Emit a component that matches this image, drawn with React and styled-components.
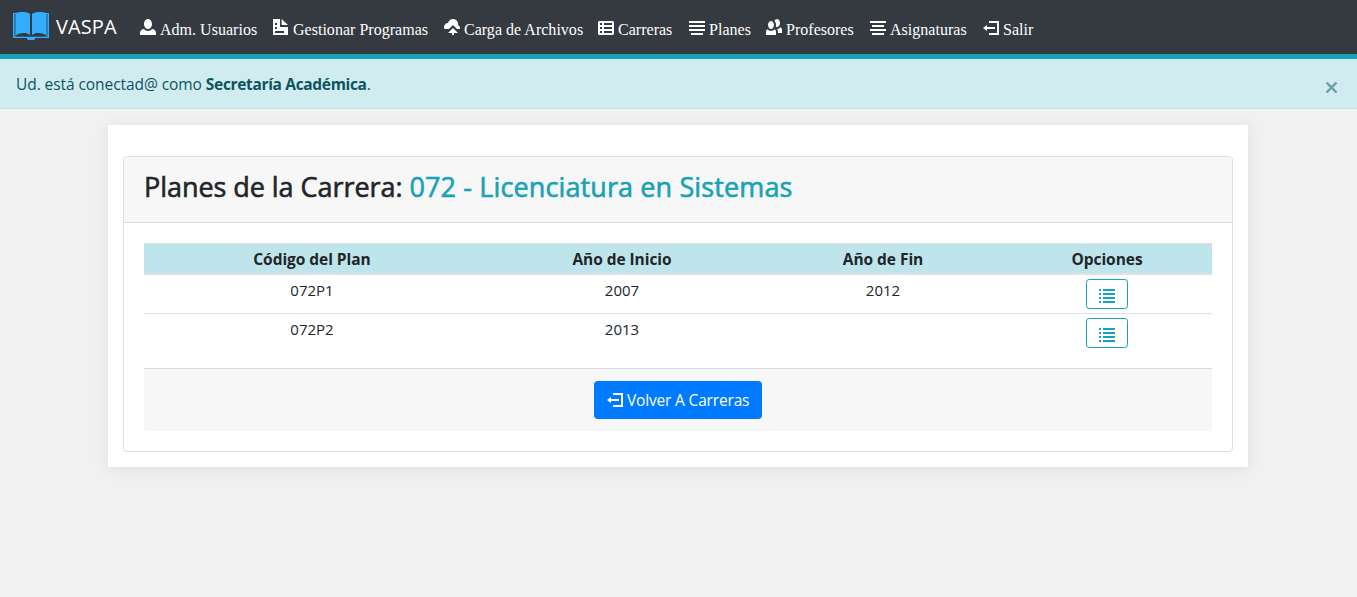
import React from 'react';
import styled, { createGlobalStyle } from 'styled-components';

const GlobalStyle = createGlobalStyle`
  *, *::before, *::after { box-sizing: border-box; }
  body {
    margin: 0;
    min-height: 100vh;
    background: #f1f1f1;
    color: #212529;
    font: 400 15.5px/24px "Open Sans", "Noto Sans", sans-serif;
  }
`;

const ICONS = {
  person: 'M4 0c-1.1 0-2 1.12-2 2.5s.9 2.5 2 2.5 2-1.12 2-2.5-.9-2.5-2-2.5zm-2.09 5c-1.06.05-1.91.92-1.91 2v1h8v-1c0-1.08-.84-1.95-1.91-2-.54.61-1.28 1-2.09 1-.81 0-1.55-.39-2.09-1z',
  document: 'M0 0v8h7.5v-4h-4v-4h-3.5zm4.3 0v3h3.2l-3.2-3zm-3.3 2h1v1h-1v-1zm0 2h1v1h-1v-1zm0 2h4.5v1h-4.5v-1z',
  cloudUpload: 'M4.5 0c-1.21 0-2.27.86-2.5 2-1.1 0-2 .9-2 2 0 .37.11.71.28 1h2.22l2-2 2 2h1.41c.05-.16.09-.32.09-.5 0-.65-.42-1.29-1-1.5v-.5c0-1.38-1.12-2.5-2.5-2.5zm0 4.5l-2.5 2.5h2v1h1v-1h2l-2.5-2.5z',
  spreadsheet: 'M.75 1c-.41 0-.75.34-.75.75v5.5c0 .41.34.75.75.75h6.5c.41 0 .75-.34.75-.75v-5.5c0-.41-.34-.75-.75-.75h-6.5zm.25 1h1v1h-1v-1zm2 0h4v1h-4v-1zm-2 2h1v1h-1v-1zm2 0h4v1h-4v-1zm-2 2h1v1h-1v-1zm2 0h4v1h-4v-1z',
  justify: 'M0 1v1h8v-1h-8zm0 2v1h8v-1h-8zm0 2v1h8v-1h-8zm1 2v1h6v-1h-6z',
  alignCenter: 'M0 1v1h8v-1h-8zm1 2v1h6v-1h-6zm-1 2v1h8v-1h-8zm1 2v1h6v-1h-6z',
  people: 'M5.5 0c-.51 0-.95.35-1.22.88.45.54.72 1.28.72 2.13 0 .29-.03.55-.09.81.19.11.38.19.59.19.83 0 1.5-.9 1.5-2s-.67-2-1.5-2zm-3 1c-.83 0-1.5.9-1.5 2s.67 2 1.5 2 1.5-.9 1.5-2-.67-2-1.5-2zm4.75 3.16c-.43.51-1.02.82-1.69.84.27.38.44.84.44 1.34v.66h2v-1.66c0-.52-.31-.97-.75-1.19zm-6.5 1c-.44.22-.75.67-.75 1.19v1.66h5v-1.66c0-.52-.31-.97-.75-1.19-.45.53-1.06.84-1.75.84s-1.3-.32-1.75-.84z',
  logout: 'M3 1v1h4v5h-4v1h5v-7h-5zm-1 2l-2 1.5 2 1.5v-1h4v-1h-4v-1z',
  list: 'M0 1v1h1v-1h-1zm2 0v1h6v-1h-6zm-2 2v1h1v-1h-1zm2 0v1h6v-1h-6zm-2 2v1h1v-1h-1zm2 0v1h6v-1h-6zm-2 2v1h1v-1h-1zm2 0v1h6v-1h-6z',
};

const Glyph = styled.svg`
  display: block;
  flex: none;
  width: 16px;
  height: 16px;
  fill: currentColor;
`;
const Icon = ({ name }) => (
  <Glyph viewBox="0 0 8 8" aria-hidden="true"><path d={ICONS[name]} /></Glyph>
);

const Navbar = styled.nav`
  display: flex;
  align-items: flex-start;
  height: 59px;
  padding-left: 12px;
  background: #343a40;
  border-bottom: 5px solid #17a2b8;
`;
const Brand = styled.a`
  display: flex;
  width: 128px;
  padding-top: 11px;
  color: #fff;
  font-size: 20px;
  line-height: 32px;
  letter-spacing: 0.1px;
`;
const BookLogo = styled.svg`
  flex: none;
  width: 38px;
  height: 30px;
  margin-right: 6px;
`;
const NavItem = styled.a`
  display: flex;
  width: ${p => p.$width}px;
  padding-top: 19px;
  color: #fff;
  font: 16px/22px "Liberation Serif", serif;
  white-space: nowrap;
  span { margin-left: 4px; letter-spacing: 0.02px; }
`;

const Alert = styled.div`
  display: flex;
  justify-content: space-between;
  height: 50px;
  padding: 13px 19px 0 16px;
  background: #d1ecf1;
  border-bottom: 1px solid #bee5eb;
  color: #0c5460;
  letter-spacing: -0.07px;
  b { font-weight: 700; letter-spacing: -0.33px; }
`;
const Close = styled.svg`
  width: 13px;
  height: 13px;
  margin-top: 9px;
  stroke: #6a9da6;
  stroke-width: 2.4;
`;

const Panel = styled.main`
  width: 1140px;
  margin: 16px 0 0 108px;
  padding: 31px 15px 15px;
  background: #fff;
  box-shadow: 0 2px 15px rgba(0, 0, 0, 0.08);
`;
const Card = styled.section`
  height: 296px;
  border: 1px solid #dfdfdf;
  border-radius: 4px;
`;
const CardHeader = styled.header`
  height: 66px;
  padding: 13px 20px 0;
  background: #f7f7f7;
  border-bottom: 1px solid #d9d9d9;
  border-radius: 3px 3px 0 0;
`;
const Title = styled.h3`
  margin: 0;
  font-size: 27px;
  line-height: 34px;
  font-weight: 400;
  letter-spacing: -0.05px;
  white-space: nowrap;
  -webkit-text-stroke: 0.6px currentColor;
  span { color: #17a2b8; letter-spacing: 0.12px; }
`;
const CardBody = styled.div`
  padding: 20px;
`;
const Table = styled.table`
  width: 100%;
  table-layout: fixed;
  border-collapse: separate;
  border-spacing: 0;
  text-align: center;
`;
const Th = styled.th`
  width: ${p => p.$width}px;
  height: 32px;
  padding: 1px 0 0;
  background: #bee5eb;
  border-top: 1px solid #dee2e6;
  border-bottom: 2px solid #dee2e6;
  font-size: 15.5px;
  font-weight: 700;
  line-height: 24px;
  letter-spacing: -0.05px;
`;
const Td = styled.td`
  height: 39px;
  padding: ${p => (p.$action ? '4px 0 0' : '3px 0 0')};
  border-bottom: ${p => (p.$last ? '0' : '1px solid #dee2e6')};
  vertical-align: top;
  font-size: 15px;
`;
const ListButton = styled.button`
  display: flex;
  justify-content: center;
  width: 42px;
  height: 30px;
  margin: 0 auto;
  padding: 7px 0 0;
  border: 1px solid #17a2b8;
  border-radius: 3.2px;
  background: transparent;
  color: #17a2b8;
`;
const CardFooter = styled.footer`
  display: flex;
  justify-content: center;
  height: 63px;
  margin-top: 15px;
  padding-top: 12px;
  background: #f7f7f7;
  border-top: 1px solid #d9d9d9;
  border-radius: 0 0 3px 3px;
`;
const BackButton = styled.button`
  display: flex;
  width: 168px;
  height: 38px;
  padding: 10px 0 0 13px;
  border: 0;
  border-radius: 4px;
  background: #007bff;
  color: #fff;
  font: 15.5px/18px "Open Sans", "Noto Sans", sans-serif;
  letter-spacing: -0.17px;
  white-space: nowrap;
  span { margin-left: 4px; }
`;

const NAV = [
  { icon: 'person', label: 'Adm. Usuarios', width: 133 },
  { icon: 'document', label: 'Gestionar Programas', width: 171 },
  { icon: 'cloudUpload', label: 'Carga de Archivos', width: 154 },
  { icon: 'spreadsheet', label: 'Carreras', width: 91 },
  { icon: 'justify', label: 'Planes', width: 77 },
  { icon: 'people', label: 'Profesores', width: 104 },
  { icon: 'alignCenter', label: 'Asignaturas', width: 113 },
  { icon: 'logout', label: 'Salir', width: 60 },
];
const COLUMNS = [
  ['Código del Plan', 336],
  ['Año de Inicio', 284],
  ['Año de Fin', 238],
  ['Opciones', 210],
];
const PLANS = [
  ['072P1', '2007', '2012'],
  ['072P2', '2013', ''],
];

export default function App() {
  return (
    <>
      <GlobalStyle />
      <Navbar>
        <Brand>
          <BookLogo viewBox="0 0 38 30" aria-hidden="true">
            <path fill="#2b7fb8" d="M1 2h4v22h28V2h4v25H1z" />
            <path fill="none" stroke="#33adff" d="M4 2.5H1.5v24h35v-24H34" />
            <path fill="#33adff" d="M15 26h8v2l-1 1h-6l-1-1z" />
            <path fill="#343a40" d="M4 24.5c4-3 11-3 15-.5 4-2.500 11-2.500 15 .5v1H4zM18 3h2v22h-2z" />
            <path fill="#33adff" d="M4 2c4-1.500 11-1.500 14 1v21c-3-3-10-2.500-14 0zM34 2c-4-1.500-11-1.500-14 1v21c3-3 10-2.500 14 0z" />
          </BookLogo>
          VASPA
        </Brand>
        {NAV.map(item => (
          <NavItem key={item.label} $width={item.width}>
            <Icon name={item.icon} />
            <span>{item.label}</span>
          </NavItem>
        ))}
      </Navbar>
      <Alert>
        <div>Ud. está conectad@ como <b>Secretaría Académica</b>.</div>
        <Close viewBox="0 0 13 13"><path d="M1.500 1.500l10 10M11.500 1.500l-10 10" /></Close>
      </Alert>
      <Panel>
        <Card>
          <CardHeader>
            <Title>Planes de la Carrera: <span>072 - Licenciatura en Sistemas</span></Title>
          </CardHeader>
          <CardBody>
            <Table>
              <thead>
                <tr>{COLUMNS.map(([label, width]) => <Th key={label} $width={width}>{label}</Th>)}</tr>
              </thead>
              <tbody>
                {PLANS.map((plan, row) => {
                  const last = row === PLANS.length - 1;
                  return (
                    <tr key={plan[0]}>
                      {plan.map((value, i) => <Td key={i} $last={last}>{value}</Td>)}
                      <Td $action $last={last}><ListButton><Icon name="list" /></ListButton></Td>
                    </tr>
                  );
                })}
              </tbody>
            </Table>
            <CardFooter>
              <BackButton><Icon name="logout" /><span>Volver A Carreras</span></BackButton>
            </CardFooter>
          </CardBody>
        </Card>
      </Panel>
    </>
  );
}
